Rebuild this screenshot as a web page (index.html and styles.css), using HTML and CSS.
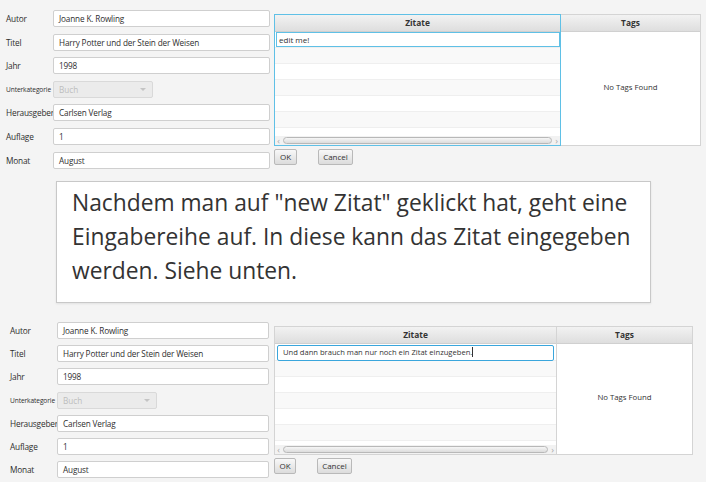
FILE: index.html
```html
<!DOCTYPE html>
<html lang="de">
<head>
<meta charset="utf-8">
<link rel="stylesheet" href="styles.css">
</head>
<body>
<div class="screen s1">
  <div class="form">
    <span class="lbl">Autor</span><div class="field">Joanne K. Rowling</div>
    <span class="lbl">Titel</span><div class="field">Harry Potter und der Stein der Weisen</div>
    <span class="lbl">Jahr</span><div class="field">1998</div>
    <span class="lbl small">Unterkategorie</span><div class="combo"><span>Buch</span><span class="arrow"></span></div>
    <span class="lbl">Herausgeber</span><div class="field">Carlsen Verlag</div>
    <span class="lbl">Auflage</span><div class="field">1</div>
    <span class="lbl">Monat</span><div class="field">August</div>
  </div>
  <div class="right">
    <div class="tables">
      <div class="tbl zitate focused">
        <div class="th">Zitate</div>
        <div class="rows">
          <div class="row odd"><div class="edit">edit me!</div></div>
          <div class="row even"></div>
          <div class="row odd"></div>
          <div class="row even"></div>
          <div class="row odd"></div>
          <div class="row even"></div>
          <div class="row odd"></div>
        </div>
        <div class="hscroll"><span class="arr">&lsaquo;</span><div class="thumb"></div><span class="arr">&rsaquo;</span></div>
      </div>
      <div class="tbl tags">
        <div class="th">Tags</div>
        <div class="empty">No Tags Found</div>
      </div>
    </div>
    <div class="buttons"><div class="btn">OK</div><div class="btn">Cancel</div></div>
  </div>
</div>

<div class="callout">Nachdem man auf "new Zitat" geklickt hat, geht eine Eingabereihe auf. In diese kann das Zitat eingegeben werden. Siehe unten.</div>

<div class="screen s2">
  <div class="form">
    <span class="lbl">Autor</span><div class="field">Joanne K. Rowling</div>
    <span class="lbl">Titel</span><div class="field">Harry Potter und der Stein der Weisen</div>
    <span class="lbl">Jahr</span><div class="field">1998</div>
    <span class="lbl small">Unterkategorie</span><div class="combo"><span>Buch</span><span class="arrow"></span></div>
    <span class="lbl">Herausgeber</span><div class="field">Carlsen Verlag</div>
    <span class="lbl">Auflage</span><div class="field">1</div>
    <span class="lbl">Monat</span><div class="field">August</div>
  </div>
  <div class="right">
    <div class="tables">
      <div class="tbl zitate">
        <div class="th">Zitate</div>
        <div class="rows">
          <div class="row odd"><div class="edit focus">Und dann brauch man nur noch ein Zitat einzugeben.<span class="caret"></span></div></div>
          <div class="row even"></div>
          <div class="row odd"></div>
          <div class="row even"></div>
          <div class="row odd"></div>
          <div class="row even"></div>
          <div class="row odd"></div>
        </div>
        <div class="hscroll"><span class="arr">&lsaquo;</span><div class="thumb"></div><span class="arr">&rsaquo;</span></div>
      </div>
      <div class="tbl tags">
        <div class="th">Tags</div>
        <div class="empty">No Tags Found</div>
      </div>
    </div>
    <div class="buttons"><div class="btn">OK</div><div class="btn">Cancel</div></div>
  </div>
</div>
</body>
</html>
```
FILE: styles.css
```css
* { box-sizing: border-box; }
html, body { margin: 0; padding: 0; }
body {
  background: #f4f4f4;
  width: 706px;
  height: 482px;
  overflow: hidden;
  font-family: "Open Sans", "Noto Sans", sans-serif;
  color: #333;
}
.screen {
  display: flex;
  align-items: flex-start;
}
.s1 { padding: 10px 0 0 6px; }
.s2 { padding: 0 0 0 10px; margin-top: 19.5px; }

.form {
  display: grid;
  grid-template-columns: 47px 217px;
  grid-auto-rows: 17px;
  row-gap: 6.6px;
  align-items: center;
}
.s2 .form { grid-template-columns: 47px 212px; row-gap: 6.2px; }
.lbl { font-size: 8.3px; white-space: nowrap; letter-spacing: -0.2px; color: #2e2e2e; }
.lbl.small { font-size: 6.6px; letter-spacing: -0.1px; }
.field {
  height: 17px;
  background: #fff;
  border: 1px solid #cfcfcf;
  border-radius: 2px;
  font-size: 8.2px;
  line-height: 15px;
  padding-left: 5px;
  white-space: nowrap;
  letter-spacing: -0.15px;
  color: #2e2e2e;
}
.combo {
  width: 100px;
  height: 17px;
  background: #ebebeb;
  border: 1px solid #d9d9d9;
  border-radius: 2px;
  font-size: 8.2px;
  line-height: 15px;
  padding: 0 6px 0 5px;
  color: #bdbdbd;
  display: flex;
  justify-content: space-between;
  align-items: center;
}
.arrow {
  width: 0; height: 0;
  border-left: 3px solid transparent;
  border-right: 3px solid transparent;
  border-top: 3px solid #c4c4c4;
}

.right { display: flex; flex-direction: column; gap: 3px; }
.s1 .right { margin: 4px 0 0 4px; }
.s2 .right { margin: 4px 0 0 5px; }
.tables { display: flex; }
.tbl {
  background: #fff;
  border: 1px solid #d4d4d4;
  display: flex;
  flex-direction: column;
  overflow: hidden;
}
.s1 .tbl { height: 132px; }
.s2 .tbl { height: 129px; }
.s1 .zitate { width: 287px; }
.s1 .tags { width: 140px; border-left: none; }
.s2 .zitate { width: 282px; border-right: none; }
.s2 .tags { width: 137px; border-left: 1px solid #d4d4d4; }
.zitate.focused { border-color: #5fc0e6; }
.th {
  height: 17px;
  flex: none;
  background: linear-gradient(#f2f2f2, #dedede);
  border-bottom: 1px solid #d0d0d0;
  font-size: 8.4px;
  font-weight: 700;
  text-align: center;
  line-height: 16px;
  color: #333;
}
.rows { flex: 1; overflow: hidden; }
.row { height: 16px; border-bottom: 1px solid #efefef; }
.row.even { background: #f9f9f9; }
.row.odd { background: #fff; }
.edit {
  height: 15px;
  margin-left: 1px;
  font-size: 8px;
  line-height: 13px;
  border: 1px solid #5fc0e6;
  padding-left: 2px;
  background: #fff;
  white-space: nowrap;
}
.edit.focus {
  margin: 1px 2px 0 2px;
  height: 16px;
  border: 1.5px solid #3aa6dc;
  border-radius: 2px;
  padding-left: 5px;
  font-size: 7.6px;
  line-height: 13px;
}
.caret {
  display: inline-block;
  width: 1px;
  height: 10px;
  background: #333;
  vertical-align: -2px;
}
.hscroll {
  height: 9px;
  flex: none;
  background: #f2f2f2;
  display: flex;
  align-items: center;
  padding: 0 1px;
  gap: 2px;
}
.arr { font-size: 9px; color: #aaa; line-height: 8px; width: 5px; text-align: center; }
.thumb {
  flex: 1;
  height: 7px;
  border: 1px solid #b8b8b8;
  border-radius: 4px;
  background: linear-gradient(#f6f6f6, #dcdcdc);
}
.empty {
  flex: 1;
  display: flex;
  align-items: center;
  justify-content: center;
  font-size: 7.8px;
  padding-bottom: 4px;
}
.buttons { display: flex; gap: 21px; }
.btn {
  height: 16px;
  border: 1px solid #b9b9b9;
  border-radius: 2px;
  background: linear-gradient(#f8f8f8, #dcdcdc);
  font-size: 8px;
  line-height: 14px;
  text-align: center;
}
.btn:first-child { width: 23px; }
.s2 .btn:first-child { width: 22px; }
.btn:last-child { width: 35px; }

.callout {
  margin: 12px 0 0 56px;
  width: 595px;
  height: 122px;
  background: #fff;
  border: 1px solid #c8c8c8;
  box-shadow: 0 1px 2px rgba(0,0,0,0.08);
  font-size: 22.8px;
  line-height: 34px;
  padding: 4px 10px 0 15px;
  color: #333;
}
```
